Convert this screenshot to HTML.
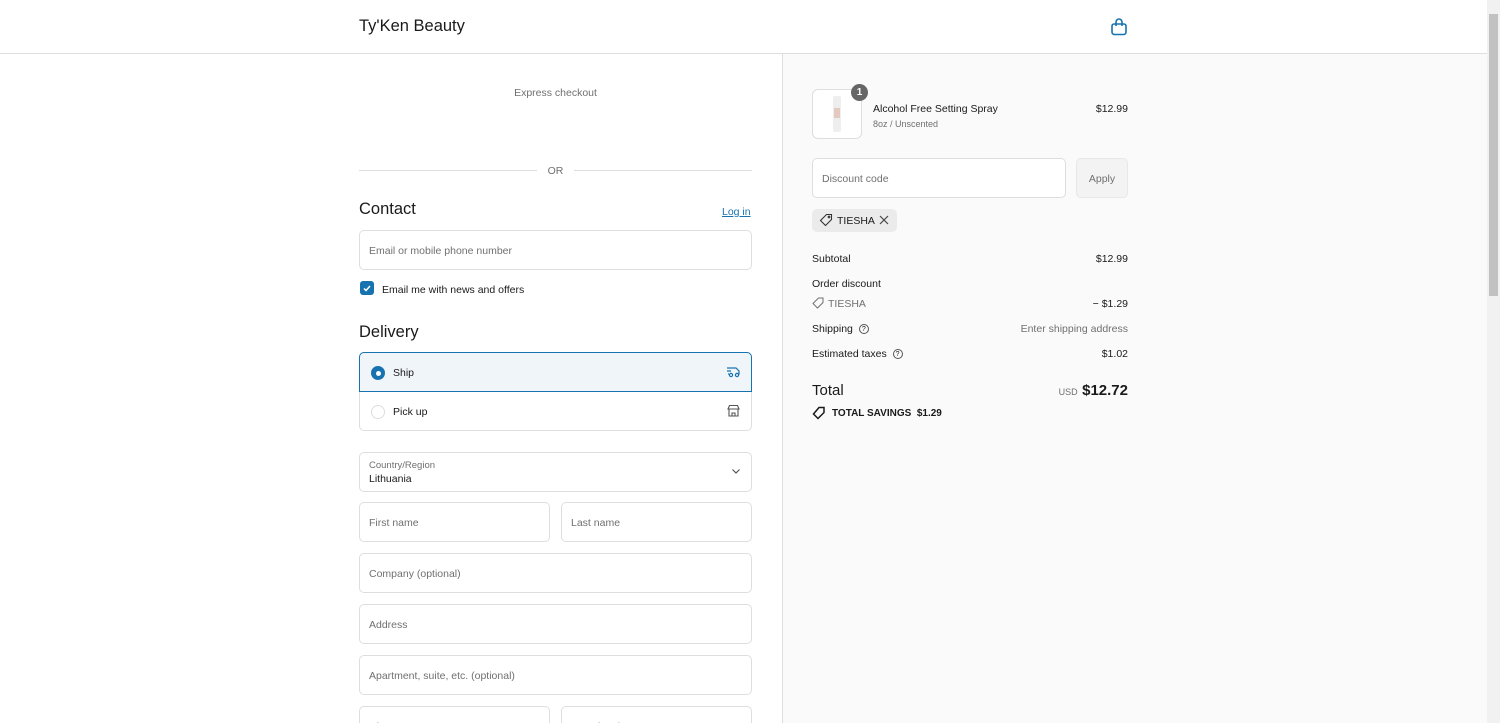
<!DOCTYPE html>
<html><head><meta charset="utf-8">
<style>
*{box-sizing:border-box;margin:0;padding:0}
html{width:1500px;height:723px;overflow:hidden}
body{width:1500px;height:723px;overflow:hidden;background:#fff;font-family:"Liberation Sans",sans-serif;color:#1a1a1a;position:relative}
.a{position:absolute}
.hdr{left:0;top:0;width:1487px;height:54px;border-bottom:1px solid #dedede;background:#fff}
.right{left:782px;top:54px;width:705px;height:669px;background:#fafafa;border-left:1px solid #dedede}
.sb{left:1487px;top:0;width:13px;height:723px;background:#f1f1f1}
.sbt{left:1489px;top:14px;width:9px;height:282px;background:#c1c1c1}
.inp{position:absolute;border:1px solid #dedede;border-radius:5px;background:#fff;height:40px;font-size:10.5px;color:#707070;padding-left:9px;line-height:40px}
.s{font-size:10.5px}
.r{text-align:right}
</style></head><body>
<div class="a hdr"></div>
<div class="a" style="left:359px;top:17px;font-size:16.5px;color:#1a1a1a">Ty'Ken Beauty</div>
<svg class="a" style="left:1110px;top:17px" width="18" height="19" viewBox="0 0 18 19" fill="none" stroke="#1773b0" stroke-width="1.6"><path d="M4 7h10a2 2 0 0 1 2 2v6a2.5 2.5 0 0 1-2.5 2.5h-9A2.5 2.5 0 0 1 2 15V9a2 2 0 0 1 2-2z"/><path d="M6 9V5a3 3 0 0 1 6 0v4"/></svg>
<div class="a right"></div>
<div class="a sb"></div><div class="a sbt"></div>

<div class="a s" style="left:359px;top:87px;width:393px;text-align:center;color:#707070">Express checkout</div>
<div class="a" style="left:359px;top:170px;width:178px;border-top:1px solid #dedede"></div>
<div class="a" style="left:574px;top:170px;width:178px;border-top:1px solid #dedede"></div>
<div class="a s" style="left:537px;top:165px;width:37px;text-align:center;color:#707070">OR</div>

<div class="a" style="left:359px;top:200px;font-size:16.5px">Contact</div>
<div class="a s" style="left:722px;top:206px;color:#1773b0;text-decoration:underline">Log in</div>
<div class="inp" style="left:359px;top:230px;width:393px">Email or mobile phone number</div>
<div class="a" style="left:360px;top:281px;width:14px;height:14px;border-radius:3px;background:#1773b0"></div>
<svg class="a" style="left:360px;top:281px" width="14" height="14"><path d="M4 7.5l2 2 4-4.5" stroke="#fff" stroke-width="1.5" fill="none"/></svg>
<div class="a s" style="left:382px;top:284px;color:#1a1a1a">Email me with news and offers</div>

<div class="a" style="left:359px;top:323px;font-size:16.5px">Delivery</div>
<div class="a" style="left:359px;top:352px;width:393px;height:79px;border:1px solid #dedede;border-radius:5px"></div>
<div class="a" style="left:359px;top:352px;width:393px;height:40px;border:1px solid #1773b0;border-radius:5px 5px 0 0;background:#f0f5fa"></div>
<div class="a" style="left:371px;top:366px;width:14px;height:14px;border-radius:50%;background:#1773b0"></div>
<div class="a" style="left:375.5px;top:370.5px;width:5px;height:5px;border-radius:50%;background:#fff"></div>
<div class="a s" style="left:393px;top:367px">Ship</div>
<svg class="a" style="left:726px;top:365px" width="15" height="13" fill="none" stroke="#1773b0" stroke-width="1.2"><path d="M1 3h9l3 3v3h-1M1 6h4M2 9h1"/><circle cx="5" cy="10" r="1.6"/><circle cx="11" cy="10" r="1.6"/></svg>
<div class="a" style="left:371px;top:405px;width:14px;height:14px;border-radius:50%;border:1px solid #dedede"></div>
<div class="a s" style="left:393px;top:406px">Pick up</div>
<svg class="a" style="left:727px;top:404px" width="13" height="13" fill="none" stroke="#555" stroke-width="1.1"><path d="M1 5l1.5-3.5h8L12 5zM2 5v7h9V5M5 12V9h3v3"/></svg>

<div class="inp" style="left:359px;top:452px;width:393px;line-height:normal;padding-top:7px"><div style="font-size:9.5px;color:#707070">Country/Region</div><div style="font-size:10.5px;color:#1a1a1a;margin-top:2px">Lithuania</div></div>
<svg class="a" style="left:731px;top:468px" width="10" height="7"><path d="M1.5 1.5l3.5 3.5 3.5-3.5" stroke="#555" stroke-width="1.2" fill="none"/></svg>
<div class="inp" style="left:359px;top:502px;width:191px">First name</div>
<div class="inp" style="left:561px;top:502px;width:191px">Last name</div>
<div class="inp" style="left:359px;top:553px;width:393px">Company (optional)</div>
<div class="inp" style="left:359px;top:604px;width:393px">Address</div>
<div class="inp" style="left:359px;top:655px;width:393px">Apartment, suite, etc. (optional)</div>
<div class="inp" style="left:359px;top:706px;width:191px">City</div>
<div class="inp" style="left:561px;top:706px;width:191px">Postal code</div>

<div class="a" style="left:812px;top:89px;width:50px;height:50px;border:1px solid #dedede;border-radius:6px;background:#fff"></div>
<div class="a" style="left:833px;top:96px;width:8px;height:36px;background:#eee;border-radius:2px"></div>
<div class="a" style="left:834px;top:108px;width:6px;height:10px;background:#e3c9c0"></div>
<div class="a" style="left:851px;top:84px;width:17px;height:17px;border-radius:50%;background:#666;color:#fff;font-size:10px;font-weight:bold;text-align:center;line-height:17px">1</div>
<div class="a s" style="left:873px;top:103px">Alcohol Free Setting Spray</div>
<div class="a" style="left:873px;top:119px;font-size:9px;color:#707070">8oz / Unscented</div>
<div class="a s r" style="left:1028px;top:103px;width:100px">$12.99</div>

<div class="inp" style="left:812px;top:158px;width:254px">Discount code</div>
<div class="a s" style="left:1076px;top:158px;width:52px;height:40px;border:1px solid #e8e8e8;border-radius:5px;background:#f3f3f3;color:#707070;text-align:center;line-height:40px">Apply</div>
<div class="a" style="left:812px;top:209px;width:85px;height:23px;border-radius:5px;background:#ebebeb"></div>
<svg class="a" style="left:819px;top:213px" width="14" height="14" fill="none" stroke="#333" stroke-width="1.1"><path d="M7.5 1.5h5v5L6.5 12.5 1.5 7.5z"/><circle cx="10" cy="4" r="0.8"/></svg>
<div class="a s" style="left:837px;top:215px">TIESHA</div>
<svg class="a" style="left:879px;top:215px" width="10" height="10"><path d="M1 1l8 8M9 1l-8 8" stroke="#444" stroke-width="1.2"/></svg>

<div class="a s" style="left:812px;top:253px">Subtotal</div><div class="a s r" style="left:1028px;top:253px;width:100px">$12.99</div>
<div class="a s" style="left:812px;top:278px">Order discount</div>
<svg class="a" style="left:812px;top:297px" width="12" height="12" fill="none" stroke="#707070" stroke-width="1"><path d="M6.5 1h4.5v4.5L5.5 11 1 6.5z"/></svg>
<div class="a s" style="left:828px;top:298px;color:#707070">TIESHA</div><div class="a s r" style="left:1028px;top:298px;width:100px">− $1.29</div>
<div class="a s" style="left:812px;top:323px">Shipping <span style="display:inline-block;width:10px;height:10px;border:1px solid #555;border-radius:50%;font-size:7px;text-align:center;line-height:9px;vertical-align:middle;margin-left:3px">?</span></div>
<div class="a s r" style="left:978px;top:323px;width:150px;color:#707070">Enter shipping address</div>
<div class="a s" style="left:812px;top:348px">Estimated taxes <span style="display:inline-block;width:10px;height:10px;border:1px solid #555;border-radius:50%;font-size:7px;text-align:center;line-height:9px;vertical-align:middle;margin-left:3px">?</span></div>
<div class="a s r" style="left:1028px;top:348px;width:100px">$1.02</div>
<div class="a" style="left:812px;top:382px;font-size:15px">Total</div>
<div class="a r" style="left:1000px;top:382px;width:128px"><span style="font-size:9px;color:#707070">USD</span> <span style="font-size:15px;font-weight:bold">$12.72</span></div>
<svg class="a" style="left:812px;top:406px" width="14" height="14" fill="none" stroke="#1a1a1a" stroke-width="1.5"><path d="M7 1.5h5v5L6 12.5 1.5 8z"/></svg>
<div class="a s" style="left:832px;top:408px;font-weight:bold;font-size:10px">TOTAL SAVINGS&nbsp; $1.29</div>
</body></html>
